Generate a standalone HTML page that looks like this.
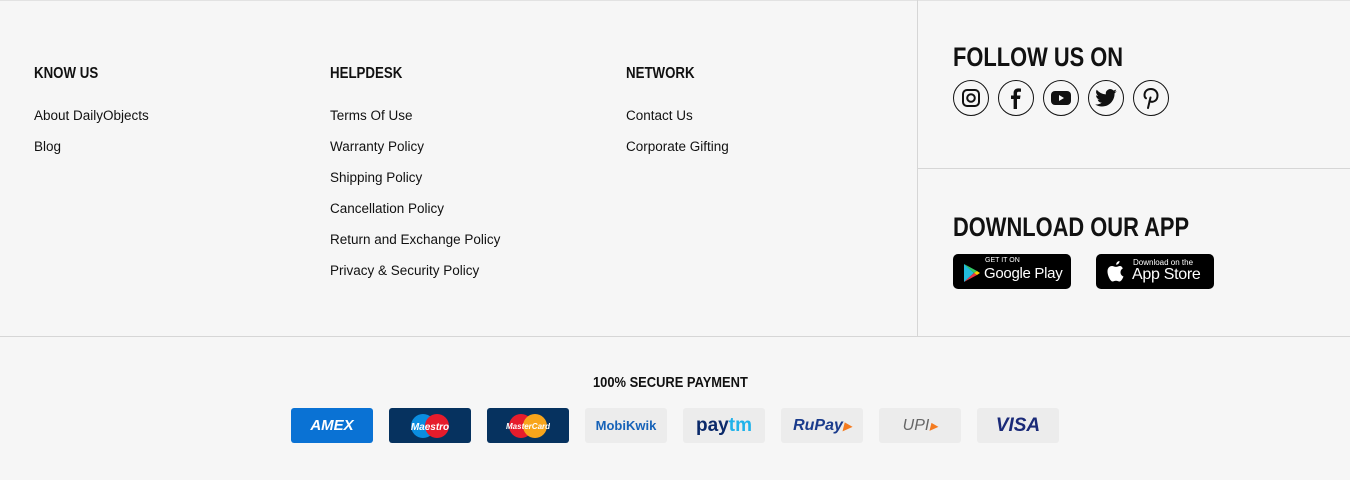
<!DOCTYPE html>
<html><head><style>
body{margin:0;width:1350px;height:480px;background:#f6f6f6;font-family:"Liberation Sans",sans-serif;position:relative;overflow:hidden;color:#111}
.h{position:absolute;font-family:"Liberation Sans Narrow","Liberation Sans",sans-serif;font-weight:bold;font-size:16px;transform:scaleX(0.83);transform-origin:left;white-space:nowrap}
.big{font-size:27px;transform:scaleX(0.81)}
.l{position:absolute;font-size:13.5px;color:#111}
.card{position:absolute;top:408px;width:82px;height:35px;border-radius:3px;display:flex;align-items:center;justify-content:center;font-weight:bold;font-style:italic}
.ic{position:absolute;top:80px;width:34px;height:34px;border:1.5px solid #111;border-radius:50%;display:flex;align-items:center;justify-content:center}
.badge{position:absolute;top:254px;width:118px;height:35px;background:#000;border-radius:5px;color:#fff}
</style></head><body>
<div style="position:absolute;left:0;top:0;width:1350px;height:1px;background:#e2e2e2"></div>
<div style="position:absolute;left:917px;top:0;width:1px;height:336px;background:#d6d6d6"></div>
<div style="position:absolute;left:918px;top:168px;width:432px;height:1px;background:#d6d6d6"></div>
<div style="position:absolute;left:0;top:336px;width:1350px;height:1px;background:#d6d6d6"></div>

<div class="h" style="left:34px;top:65px">KNOW US</div>
<div class="l" style="left:34px;top:108px">About DailyObjects</div>
<div class="l" style="left:34px;top:139px">Blog</div>

<div class="h" style="left:330px;top:65px">HELPDESK</div>
<div class="l" style="left:330px;top:108px">Terms Of Use</div>
<div class="l" style="left:330px;top:139px">Warranty Policy</div>
<div class="l" style="left:330px;top:170px">Shipping Policy</div>
<div class="l" style="left:330px;top:201px">Cancellation Policy</div>
<div class="l" style="left:330px;top:232px">Return and Exchange Policy</div>
<div class="l" style="left:330px;top:263px">Privacy &amp; Security Policy</div>

<div class="h" style="left:626px;top:65px">NETWORK</div>
<div class="l" style="left:626px;top:108px">Contact Us</div>
<div class="l" style="left:626px;top:139px">Corporate Gifting</div>

<div class="h big" style="left:953px;top:42px">FOLLOW US ON</div>
<div class="ic" style="left:953px"><svg width="20" height="20" viewBox="0 0 20 20"><rect x="2" y="2" width="16" height="16" rx="4" fill="none" stroke="#111" stroke-width="2"/><circle cx="10" cy="10" r="3.8" fill="none" stroke="#111" stroke-width="2"/></svg></div>
<div class="ic" style="left:998px"><svg width="20" height="22" viewBox="0 0 20 22"><path d="M11 22V12h3l.5-3.5H11V6.5c0-1 .3-1.7 1.8-1.7H15V1.6C14.6 1.5 13.5 1.4 12.3 1.4 9.6 1.4 7.6 3 7.6 6v2.5H5V12h2.6v10z" fill="#111"/></svg></div>
<div class="ic" style="left:1043px"><svg width="22" height="16" viewBox="0 0 22 16"><rect x="1" y="1" width="20" height="14" rx="4" fill="#111"/><path d="M9 5v6l5-3z" fill="#f6f6f6"/></svg></div>
<div class="ic" style="left:1088px"><svg width="22" height="18" viewBox="0 0 24 20"><path d="M24 2.4c-.9.4-1.8.7-2.8.8 1-.6 1.8-1.6 2.200-2.700-1 .6-2 1-3.1 1.2A4.9 4.9 0 0 0 11.9 6 14 14 0 0 1 1.7.9a4.9 4.9 0 0 0 1.5 6.6c-.8 0-1.600-.3-2.200-.6 0 2.400 1.700 4.400 3.900 4.800-.7.2-1.500.2-2.200.1.6 2 2.400 3.400 4.600 3.400A9.9 9.9 0 0 1 0 17.2 14 14 0 0 0 7.5 19.4c9.1 0 14-7.5 14-14v-.6c1-.7 1.8-1.6 2.5-2.4z" fill="#111"/></svg></div>
<div class="ic" style="left:1133px"><svg width="18" height="22" viewBox="0 0 18 22"><path d="M6 21l2.5-10.5M7.5 14c3 2 8 0 8-5.5C15.5 4.5 12.5 2 9 2 4.5 2 2.5 5 2.5 8c0 1.5.6 2.8 1.5 3.3" fill="none" stroke="#111" stroke-width="2" stroke-linecap="round"/></svg></div>

<div class="h big" style="left:953px;top:212px">DOWNLOAD OUR APP</div>
<div class="badge" style="left:953px">
<svg style="position:absolute;left:9px;top:9px" width="20" height="20" viewBox="0 0 20 20"><path d="M2 1l10 9-10 9z" fill="#2bd"/><path d="M2 1l13 7-3 2z" fill="#3c6"/><path d="M2 19l13-7-3-2z" fill="#e34"/><path d="M15 8l3 2-3 2-3-2z" fill="#fc0"/></svg>
<div style="position:absolute;left:32px;top:3px;font-size:7px">GET IT ON</div>
<div style="position:absolute;left:31px;top:11px;font-size:15px;letter-spacing:-0.3px">Google Play</div></div>
<div class="badge" style="left:1096px">
<svg style="position:absolute;left:10px;top:7px" width="20" height="22" viewBox="0 0 20 22"><path d="M14 5c-1.5 0-2.5.9-4 .9S7.5 5 6 5C3.5 5 1.5 7 1.5 10.5c0 4 3 10 5 10 1.2 0 1.8-.8 3.5-.8s2.2.8 3.5.8c1.7 0 3.5-3.5 4-5-2-.8-3-2.5-3-4.3 0-1.6.9-3 2.300-3.700C16 5.6 15 5 14 5zM13.5 0c.2 1.8-1.500 3.800-3.300 3.700-.2-1.800 1.500-3.700 3.300-3.700z" fill="#fff"/></svg>
<div style="position:absolute;left:37px;top:4px;font-size:8px">Download on the</div>
<div style="position:absolute;left:36px;top:12px;font-size:16px;letter-spacing:-0.3px">App Store</div></div>

<div class="h" style="left:593px;top:374px;font-size:15px;transform:scaleX(0.86)">100% SECURE PAYMENT</div>
<div class="card" style="left:291px;background:#0a72d4;color:#fff;font-size:15px">AMEX</div>
<div class="card" style="left:389px;background:#06325f"><svg width="44" height="26"><circle cx="15" cy="13" r="12" fill="#0a8de0"/><circle cx="29" cy="13" r="12" fill="#e61c2c"/><text x="22" y="17" fill="#fff" font-size="10" font-family="Liberation Sans" font-weight="bold" text-anchor="middle">Maestro</text></svg></div>
<div class="card" style="left:487px;background:#06325f"><svg width="44" height="26"><circle cx="15" cy="13" r="12" fill="#e61c2c"/><circle cx="29" cy="13" r="12" fill="#f8a51b"/><text x="22" y="16" fill="#fff" font-size="8" font-family="Liberation Sans" font-weight="bold" text-anchor="middle">MasterCard</text></svg></div>
<div class="card" style="left:585px;background:#ececec;color:#1662b8;font-size:13px;font-style:normal">MobiKwik</div>
<div class="card" style="left:683px;background:#ececec;font-size:19px;font-style:normal"><span style="color:#0b2a6a">pay</span><span style="color:#1fb2ea">tm</span></div>
<div class="card" style="left:781px;background:#ececec;color:#1a3b8c;font-size:16px">RuPay<span style="color:#f47b20">▸</span></div>
<div class="card" style="left:879px;background:#ececec;color:#666;font-size:16px;font-weight:normal">UPI<span style="color:#f47b20">▸</span></div>
<div class="card" style="left:977px;background:#ececec;color:#1a2a78;font-size:19px">VISA</div>
</body></html>
